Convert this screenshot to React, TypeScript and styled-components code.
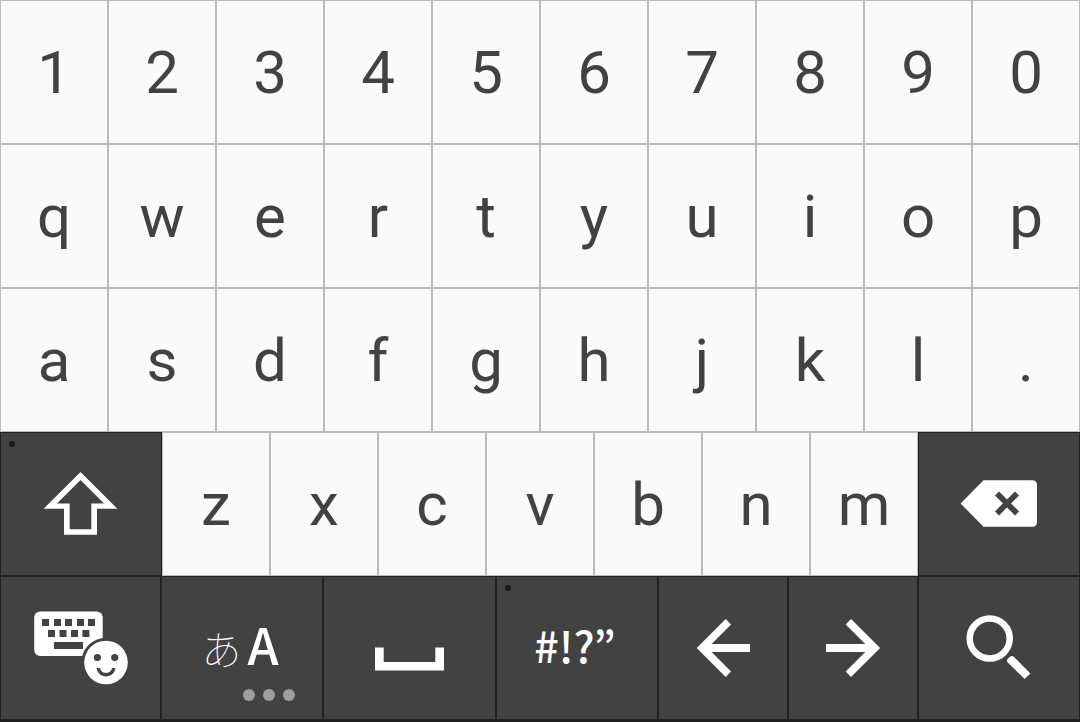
import React from "react";
import styled, { createGlobalStyle } from "styled-components";

const GlobalStyle = createGlobalStyle`
  * { box-sizing: border-box; }
  body { margin: 0; background: #212121; }
`;

const Keyboard = styled.main`
  display: flex;
  flex-direction: column;
  width: 100%;
  padding-bottom: 2px;
  background: #212121;
`;

const Row = styled.div<{ $columns: string }>`
  display: grid;
  grid-template-columns: ${(p) => p.$columns};
  grid-auto-rows: 144px;
`;

const Key = styled.button`
  position: relative;
  display: flex;
  align-items: center;
  justify-content: center;
  min-width: 0;
  margin: 0;
  padding: 2px 0 0;
  border: 1px solid #bdbdbd;
  border-radius: 0;
  background: #fafafa;
  color: #424242;
  font-family: Roboto, sans-serif;
  font-size: 60px;
  font-weight: 400;
  line-height: 72px;
  cursor: pointer;
`;

const FunctionKey = styled(Key)<{ $hint?: boolean }>`
  padding: 0;
  border-color: #212121;
  background: #424242;
  color: #ffffff;

  &::before {
    content: "";
    display: ${(p) => (p.$hint ? "block" : "none")};
    position: absolute;
    top: 8px;
    left: 8px;
    width: 6px;
    height: 6px;
    border-radius: 50%;
    background: #181818;
  }
`;

const Icon = styled.svg`
  display: block;
  flex: none;
  fill: #ffffff;
`;

const ModeLabel = styled.span`
  display: flex;
  align-items: baseline;
  gap: 6px;
  padding: 0 4px 6px 0;
  font-family: "Noto Sans CJK JP", sans-serif;
  line-height: 72px;
`;

const Kana = styled.span`
  font-size: 40px;
  font-weight: 100;
`;

const Latin = styled.span`
  font-size: 50px;
  font-weight: 500;
`;

const SymbolLabel = styled.span`
  padding: 0 4px 8px 0;
  font-family: "Noto Sans CJK JP", sans-serif;
  font-size: 43px;
  font-weight: 500;
  line-height: 72px;
`;

const MoreDots = styled.span`
  position: absolute;
  right: 27px;
  bottom: 18px;
  display: flex;
  gap: 8px;

  i {
    width: 12px;
    height: 12px;
    border-radius: 50%;
    background: #9e9e9e;
  }
`;

const TEN = "repeat(10, 1fr)";
const SHIFT_ROW = "162fr repeat(7, 108fr) 162fr";
const BOTTOM_ROW = "161fr 162fr 173fr 162fr 130fr 130fr 162fr";

const Letters = ({ chars }: { chars: string }) => (
  <>
    {chars.split("").map((c) => (
      <Key key={c} type="button">{c}</Key>
    ))}
  </>
);

const ShiftIcon = () => (
  <Icon width="96" height="96" viewBox="0 0 96 96" aria-hidden="true">
    <path
      fillRule="evenodd"
      d="M47.5 16L84.4 52.8H64V78.7H31V52.8H10.6ZM47.5 24L24 47.6H36.7V73.3H58.3V47.6H71Z"
    />
  </Icon>
);

const BackspaceIcon = () => (
  <Icon width="96" height="96" viewBox="0 0 96 96" aria-hidden="true">
    <path d="M9.6 47.5L32.5 24.3H81Q86 24.3 86 29.3V65.7Q86 70.7 81 70.7H32.5Z" />
    <path d="M46 37.4L66 57.4M66 37.4L46 57.4" stroke="#424242" strokeWidth="5.7" />
  </Icon>
);

const KeyboardEmojiIcon = () => (
  <Icon width="97" height="96" viewBox="0 0 97 96" aria-hidden="true">
    <rect x="2.2" y="11.5" width="68.5" height="44.5" rx="6" />
    <g fill="#424242">
      {[10, 22, 33, 45, 56].map((x) => (
        <rect key={x} x={x} y="19" width="7" height="7" />
      ))}
      {[16, 27.5, 39, 50.4].map((x) => (
        <rect key={x} x={x} y="30" width="7" height="7" />
      ))}
      <rect x="22" y="42" width="29" height="7" />
      <circle cx="74" cy="62.5" r="24.7" />
    </g>
    <circle cx="74" cy="62.5" r="21.8" />
    <g fill="#424242">
      <circle cx="65.4" cy="57.5" r="3.6" />
      <circle cx="82.7" cy="57.5" r="3.6" />
      <path d="M64.7 68H68C69 74.6 79 74.6 80 68H83.4C82.4 79.2 65.7 79.2 64.7 68Z" />
    </g>
  </Icon>
);

const SpaceIcon = () => (
  <Icon width="97" height="96" viewBox="0 0 97 96" aria-hidden="true">
    <path d="M14 47.5H22.7V62H74.3V47.5H83V70.5H14Z" />
  </Icon>
);

const LeftIcon = () => (
  <Icon width="96" height="96" viewBox="0 0 96 96" aria-hidden="true">
    <path d="M21.7 48L50.7 19L56 24.4L36.6 44H75V52H36.6L56 71.6L50.7 77Z" />
  </Icon>
);

const RightIcon = () => (
  <Icon width="96" height="96" viewBox="0 0 96 96" aria-hidden="true">
    <path d="M75.1 48L46 19L40.7 24.4L60.2 44H21V52H60.2L40.7 71.6L46 77Z" />
  </Icon>
);

const SearchIcon = () => (
  <Icon width="96" height="96" viewBox="0 0 96 96" aria-hidden="true">
    <circle cx="38.7" cy="38.5" r="20" fill="none" stroke="#ffffff" strokeWidth="6.5" />
    <path d="M56.4 59.2L59.2 56.4Q61 55.4 62.6 56.6L79.4 73.6L73.6 79L56.8 62.4Q55.4 61 56.4 59.2Z" />
  </Icon>
);

export default function App() {
  return (
    <>
      <GlobalStyle />
      <Keyboard>
        <Row $columns={TEN}><Letters chars="1234567890" /></Row>
        <Row $columns={TEN}><Letters chars="qwertyuiop" /></Row>
        <Row $columns={TEN}><Letters chars="asdfghjkl." /></Row>
        <Row $columns={SHIFT_ROW}>
          <FunctionKey type="button" aria-label="Shift" $hint><ShiftIcon /></FunctionKey>
          <Letters chars="zxcvbnm" />
          <FunctionKey type="button" aria-label="Backspace"><BackspaceIcon /></FunctionKey>
        </Row>
        <Row $columns={BOTTOM_ROW}>
          <FunctionKey type="button" aria-label="Keyboard and emoji"><KeyboardEmojiIcon /></FunctionKey>
          <FunctionKey type="button">
            <ModeLabel>
              <Kana lang="ja">あ</Kana>
              <Latin>A</Latin>
            </ModeLabel>
            <MoreDots aria-hidden="true"><i /><i /><i /></MoreDots>
          </FunctionKey>
          <FunctionKey type="button" aria-label="Space"><SpaceIcon /></FunctionKey>
          <FunctionKey type="button" $hint><SymbolLabel>#!?”</SymbolLabel></FunctionKey>
          <FunctionKey type="button" aria-label="Move left"><LeftIcon /></FunctionKey>
          <FunctionKey type="button" aria-label="Move right"><RightIcon /></FunctionKey>
          <FunctionKey type="button" aria-label="Search"><SearchIcon /></FunctionKey>
        </Row>
      </Keyboard>
    </>
  );
}
